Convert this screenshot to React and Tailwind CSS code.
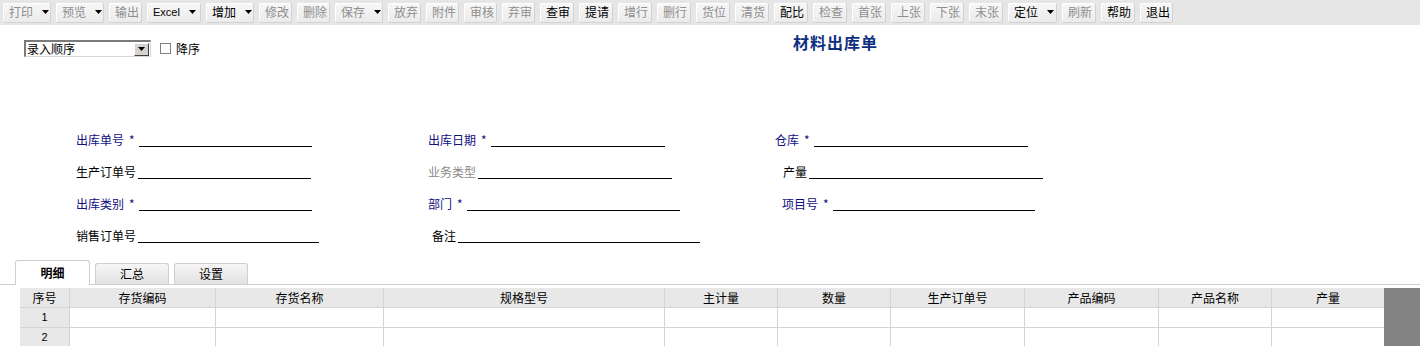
import React from 'react';

const tools = [
  { t: '打印', off: true, arrow: true, w: 48 },
  { t: '预览', off: true, arrow: true, w: 48 },
  { t: '输出', off: true, w: 33 },
  { t: 'Excel', arrow: true, w: 54, latin: true },
  { t: '增加', arrow: true, w: 48 },
  { t: '修改', off: true, w: 33 },
  { t: '删除', off: true, w: 33 },
  { t: '保存', off: true, arrow: true, w: 48 },
  { t: '放弃', off: true, w: 33 },
  { t: '附件', off: true, w: 33 },
  { t: '审核', off: true, w: 33 },
  { t: '弃审', off: true, w: 33 },
  { t: '查审', w: 34 },
  { t: '提请', w: 34 },
  { t: '增行', off: true, w: 34 },
  { t: '删行', off: true, w: 34 },
  { t: '货位', off: true, w: 34 },
  { t: '清货', off: true, w: 34 },
  { t: '配比', w: 34 },
  { t: '检查', off: true, w: 34 },
  { t: '首张', off: true, w: 34 },
  { t: '上张', off: true, w: 34 },
  { t: '下张', off: true, w: 34 },
  { t: '末张', off: true, w: 34 },
  { t: '定位', arrow: true, w: 49 },
  { t: '刷新', off: true, w: 34 },
  { t: '帮助', w: 34 },
  { t: '退出', w: 33 },
];

const columns = [
  { t: '序号', w: 49 },
  { t: '存货编码', w: 146 },
  { t: '存货名称', w: 168 },
  { t: '规格型号', w: 281 },
  { t: '主计量', w: 113 },
  { t: '数量', w: 113 },
  { t: '生产订单号', w: 134 },
  { t: '产品编码', w: 134 },
  { t: '产品名称', w: 113 },
  { t: '产量', w: 113 },
];

function Arrow() {
  return (
    <svg width="7" height="4" viewBox="0 0 7 4" className="shrink-0">
      <path d="M0 0H7L3.5 4Z" fill="#000" />
    </svg>
  );
}

function ToolButton({ t, off, arrow, w, latin }) {
  return (
    <div
      style={{ width: w }}
      className="h-[20px] flex items-center pl-[6px] gap-[9px] rounded-[2px] bg-gradient-to-b from-[#f7f7f7] to-[#ebebeb] border-r border-b border-[#d2d2d2] shadow-[inset_1px_1px_0_#ffffff]"
    >
      <span
        className={
          (off ? 'text-[#8e8e8e] ' : 'text-black ') +
          (latin ? "text-[11px] font-['Liberation_Sans',sans-serif] " : 'text-[12px] ') +
          'leading-none whitespace-nowrap'
        }
      >
        {t}
      </span>
      {arrow && <Arrow />}
    </div>
  );
}

function Field({ label, req, blue, gray, line, pl = 0 }) {
  const color = blue ? 'text-[#10107e]' : gray ? 'text-[#8a8a8a]' : 'text-black';
  return (
    <div className="flex items-end" style={{ paddingLeft: pl }}>
      <span className={color + ' text-[12px] leading-[14px] whitespace-nowrap'}>
        {label}
        {req && <span className="ml-[5px] mr-[2px]">*</span>}
      </span>
      <span style={{ width: line }} className="block h-[14px] border-b border-black ml-[2px]" />
    </div>
  );
}

function FormRow({ cells }) {
  return (
    <div className="h-[32px] flex items-center">
      <div className="w-[76px] shrink-0" />
      <div className="w-[352px] shrink-0">{cells[0]}</div>
      <div className="w-[347px] shrink-0">{cells[1]}</div>
      <div className="shrink-0">{cells[2]}</div>
    </div>
  );
}

export default function App() {
  return (
    <div className="w-[1420px] h-[346px] overflow-hidden bg-white font-['Noto_Sans_CJK_SC','Liberation_Sans',sans-serif] text-black">
      {/* toolbar */}
      <div className="h-[25px] bg-[#e6e6e6] flex items-center gap-[5px] pl-[3px]">
        {tools.map((b) => (
          <ToolButton key={b.t} {...b} />
        ))}
      </div>

      {/* header: sort selector + title */}
      <div className="h-[99px] flex items-start">
        <div className="w-[793px] shrink-0 flex items-center pt-[15px] pl-[24px]">
          <div className="w-[127px] h-[17px] flex items-center border-t-2 border-l-2 border-[#7a7a7a] border-b border-r border-b-[#d8d8d8] border-r-[#d8d8d8] bg-white">
            <span className="flex-1 text-[12px] leading-none pl-[1px]">录入顺序</span>
            <div className="w-[15px] h-[13px] mr-[1px] bg-[#d6d3ce] border-t border-l border-white border-b border-r border-b-[#404040] border-r-[#404040] flex items-center justify-center">
              <Arrow />
            </div>
          </div>
          <div className="ml-[9px] w-[11px] h-[11px] border border-[#808080] bg-white" />
          <span className="ml-[5px] text-[12px] leading-none">降序</span>
        </div>
        <h1 className="pt-[7px] text-[16px] leading-[20px] font-bold text-[#0e2f7e] tracking-[1px]">材料出库单</h1>
      </div>

      {/* form */}
      <div className="flex flex-col">
        <FormRow
          cells={[
            <Field label="出库单号" req blue line={173} />,
            <Field label="出库日期" req blue line={174} />,
            <Field label="仓库" req blue line={214} />,
          ]}
        />
        <FormRow
          cells={[
            <Field label="生产订单号" line={173} />,
            <Field label="业务类型" gray line={194} />,
            <Field label="产量" pl={8} line={234} />,
          ]}
        />
        <FormRow
          cells={[
            <Field label="出库类别" req blue line={173} />,
            <Field label="部门" req blue line={213} />,
            <Field label="项目号" req blue pl={7} line={202} />,
          ]}
        />
        <FormRow
          cells={[
            <Field label="销售订单号" line={181} />,
            <Field label="备注" pl={4} line={242} />,
            null,
          ]}
        />
      </div>

      {/* tabs */}
      <div className="pt-[8px] pl-[15px] flex items-end border-b border-[#cfcfcf] h-[33px]">
        <div className="w-[75px] h-[25px] -mb-[1px] bg-white border border-b-0 border-[#cfcfcf] rounded-t-[3px] flex items-center justify-center text-[12px] font-bold">
          明细
        </div>
        <div className="ml-[5px] w-[74px] h-[21px] bg-gradient-to-b from-[#f6f6f6] to-[#e2e2e2] border border-b-0 border-[#cfcfcf] rounded-t-[3px] flex items-center justify-center text-[12px]">
          汇总
        </div>
        <div className="ml-[5px] w-[74px] h-[21px] bg-gradient-to-b from-[#f6f6f6] to-[#e2e2e2] border border-b-0 border-[#cfcfcf] rounded-t-[3px] flex items-center justify-center text-[12px]">
          设置
        </div>
      </div>

      {/* grid */}
      <div className="pt-[3px] pl-[20px] flex">
        <div className="flex flex-col">
          <div className="flex h-[20px] bg-[#e8e8e8] border-b border-[#d4d4d4]">
            {columns.map((c, i) => (
              <div
                key={c.t}
                style={{ width: c.w }}
                className={(i > 0 ? 'border-l border-[#d4d4d4] ' : '') + 'flex items-center justify-center text-[12px] leading-none'}
              >
                {c.t}
              </div>
            ))}
          </div>
          {[1, 2].map((n) => (
            <div key={n} className="flex h-[20px] border-b border-[#d4d4d4]">
              {columns.map((c, i) => (
                <div
                  key={c.t}
                  style={{ width: c.w }}
                  className={
                    (i === 0 ? 'bg-[#e8e8e8] text-[11px] ' : 'bg-white border-l border-[#d4d4d4] ') +
                    "flex items-center justify-center leading-none font-['Liberation_Sans',sans-serif]"
                  }
                >
                  {i === 0 ? n : ''}
                </div>
              ))}
            </div>
          ))}
        </div>
        <div className="flex-1 h-[60px] bg-[#848484]" />
      </div>
    </div>
  );
}
